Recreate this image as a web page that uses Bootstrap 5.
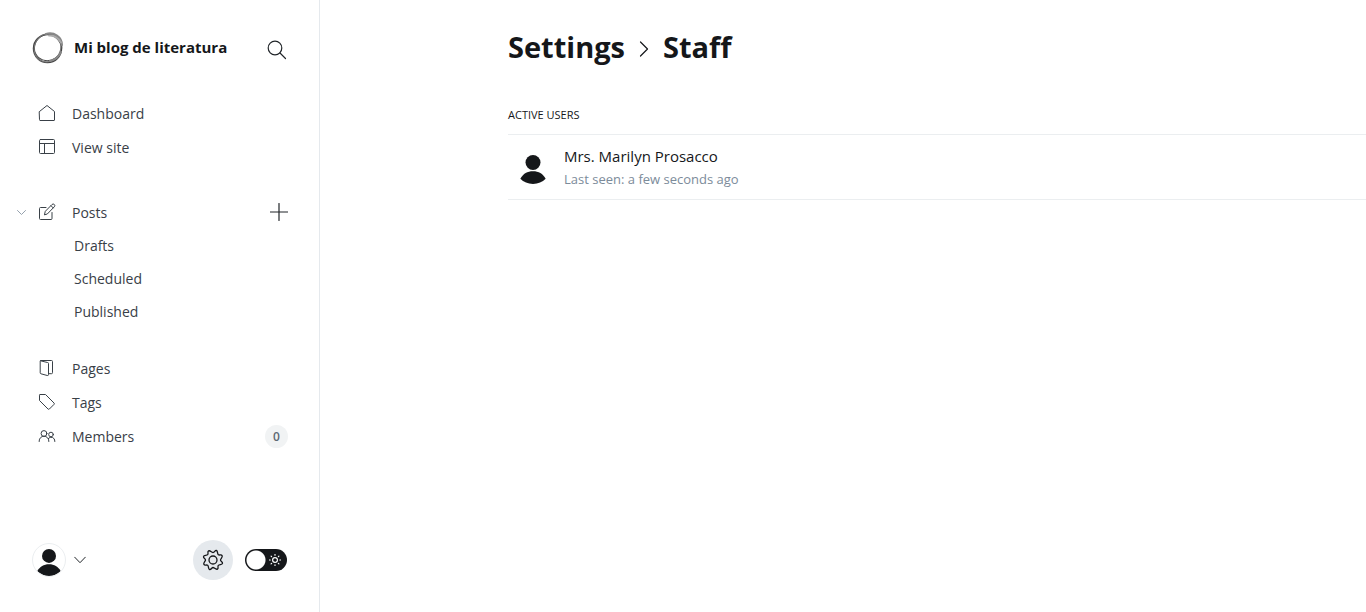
<!DOCTYPE html>
<html lang="es">
<head>
<meta charset="utf-8">
<meta name="viewport" content="width=device-width, initial-scale=1">
<title>Settings - Staff</title>
<link href="https://cdn.jsdelivr.net/npm/bootstrap@5.3.0/dist/css/bootstrap.min.css" rel="stylesheet">
<style>
:root { --ink: #15171a; --slate: #394047; --muted-ink: #7c8b9a; --line: #ebeef0; }
body { font-family: "Open Sans", "Noto Sans", sans-serif; font-size: 14px; color: var(--ink); }
svg { display: block; fill: none; stroke: currentColor; stroke-linecap: round; stroke-linejoin: round; flex: none; }
button { color: inherit; }
.sidebar { width: 320px; flex: none; border-right: 1px solid #e5e9ed; padding: 32px; }
.site-name { font-size: 15px; font-weight: 700; line-height: 30px; margin-left: 10px; }
.menu-list { margin: 0 -15px; }
.menu-row { height: 34px; padding-left: 21px; padding-right: 14px; }
.menu-row a, .sub-row a { color: var(--slate); text-decoration: none; }
.menu-row a { display: flex; align-items: center; gap: 16px; }
.sub-row { height: 33px; line-height: 33px; padding-left: 57px; }
.posts-group { margin: 31px 0 23px; }
.fold-btn { width: 9px; margin-left: -21px; margin-right: 12px; color: #95a1ad; }
.count-pill { min-width: 23px; height: 23px; line-height: 23px; background: #f1f3f4; font-size: 12px; font-weight: 600; color: #5d6873; }
.avatar-ring { width: 34px; height: 34px; border: 1px solid var(--line); border-radius: 50%; }
.gear-btn { width: 40px; height: 40px; background: #e5e9ed; display: grid; place-items: center; color: var(--ink); }
.night { width: 42px; height: 22px; margin-left: 12px; }
.night input { appearance: none; display: block; width: 42px; height: 22px; margin: 0; border-radius: 11px; background: radial-gradient(circle at 11px 11px, #fff 9px, var(--ink) 10px); }
.night svg { position: absolute; right: 6px; top: 5px; color: #fff; pointer-events: none; }
.content { margin-left: 188px; padding-top: 26px; }
h1 { font-size: 29px; font-weight: 700; line-height: 42px; margin: 0; }
h1 a { color: inherit; text-decoration: none; }
.crumb-arrow { margin: 4px 14px 0; }
h2 { font-size: 11px; font-weight: 400; line-height: 16px; margin: 39px 0 11px; text-transform: uppercase; }
.person { border-top: 1px solid var(--line); border-bottom: 1px solid var(--line); height: 66px; padding-left: 10px; color: var(--ink); text-decoration: none; }
.person-name { font-size: 15px; font-weight: 500; line-height: 23px; }
.seen { font-size: 13px; line-height: 22px; color: var(--muted-ink); }
</style>
</head>
<body>
<svg width="0" height="0" class="position-absolute" aria-hidden="true">
  <symbol id="user" viewBox="0 0 32 32"><g fill="#15171a" stroke="none"><circle cx="16" cy="9" r="8"/><path d="M2.500 26.500C5.500 21 10 18.500 16 18.500S26.500 21 29.500 26.500C26 30 21.500 32 16 32S6 30 2.500 26.500Z"/></g></symbol>
</svg>
<div class="d-flex min-vh-100">
  <nav class="sidebar d-flex flex-column" aria-label="Main">
    <header class="d-flex align-items-start mb-3 pb-3">
      <svg width="32" height="32" viewBox="0 0 32 32"><g stroke="#444"><circle cx="15.500" cy="16.500" r="14" stroke-width="1.500"/><ellipse cx="16.500" cy="15.500" rx="14" ry="13" transform="rotate(-35 16 16)" stroke-width="1"/><ellipse cx="15.500" cy="16" rx="13" ry="14.500" transform="rotate(30 16 16)" stroke="#777" stroke-width="1"/><path d="M14 2C22-.5 30 5 30 13M29 20c-2 5-6 8-11 9" stroke="#888" stroke-width="2"/><path d="M17 3.500c5-.5 9 2 12 7" stroke="#aaa" stroke-width="2"/></g></svg>
      <span class="site-name">Mi blog de literatura</span>
      <button class="btn p-0 border-0 ms-auto mt-1" aria-label="Search"><svg class="mt-1" width="20" height="20" viewBox="0 0 20 20" stroke-width="1.200"><circle cx="8" cy="8" r="6.800"/><path d="m13 13 5.500 5.500"/></svg></button>
    </header>
    <ul class="menu-list list-unstyled mt-n1">
      <li class="menu-row d-flex align-items-center"><a href="#"><svg width="18" height="18" viewBox="0 0 18 18"><path d="M1.500 7.500 9 1.500l7.500 6V16a.5.500 0 0 1-.5.500H2a.5.500 0 0 1-.5-.5Z"/></svg>Dashboard</a></li>
      <li class="menu-row d-flex align-items-center"><a href="#"><svg width="18" height="18" viewBox="0 0 18 18" stroke="#60686f"><rect x="1.500" y="1.500" width="15" height="14" rx="1"/><path d="M1.500 5.500h15M6.500 5.500v10"/></svg>View site</a></li>
      <li class="posts-group">
        <div class="menu-row d-flex align-items-center"><button class="fold-btn btn p-0 border-0" aria-label="Toggle posts"><svg width="9" height="5" viewBox="0 0 9 5"><path d="m.5.5 4 4 4-4"/></svg></button><a href="#"><svg width="18" height="18" viewBox="0 0 18 18"><path d="M8 4.500H2.500a1 1 0 0 0-1 1v10a1 1 0 0 0 1 1h10.500a1 1 0 0 0 1-1V9.500M6.500 11.500l.8-3.200 6.700-6.800a1.300 1.300 0 0 1 2.300 2.300L9.600 10.700ZM13 2.700l2.200 2.200"/></svg>Posts</a><button class="btn p-0 border-0 ms-auto" aria-label="New post"><svg width="18" height="18" viewBox="0 0 18 18" stroke="#50585f" stroke-width="1.200"><path d="M9 .5v17M.5 9h17"/></svg></button></div>
        <ul class="list-unstyled">
          <li class="sub-row"><a href="#">Drafts</a></li>
          <li class="sub-row"><a href="#">Scheduled</a></li>
          <li class="sub-row"><a href="#">Published</a></li>
        </ul>
      </li>
      <li class="menu-row d-flex align-items-center"><a href="#"><svg width="18" height="18" viewBox="0 0 18 18" stroke="#60686f"><path d="M2.500 1.800 9.500 3.500a1 1 0 0 1 1 1V15.500a1 1 0 0 1-1.200 1L3 14.800a1 1 0 0 1-.8-1V2.200A.7.700 0 0 1 3 1.500h10.500a1 1 0 0 1 1 1v11.200a1 1 0 0 1-1 1h-3"/></svg>Pages</a></li>
      <li class="menu-row d-flex align-items-center"><a href="#"><svg width="18" height="18" viewBox="0 0 18 18"><path d="M2.200 1.500H7.500L16 10a1 1 0 0 1 0 1.400L11.400 16a1 1 0 0 1-1.400 0L1.500 7.500V2.200a.7.700 0 0 1 .7-.7Z"/></svg>Tags</a></li>
      <li class="menu-row d-flex align-items-center"><a href="#"><svg width="18" height="18" viewBox="0 0 18 18"><circle cx="6" cy="6.500" r="2.900"/><circle cx="13" cy="7.500" r="2.300"/><path d="M1.200 14.500v-.5a4.800 4.800 0 0 1 9.600 0v.5M10.300 11.500a3.700 3.700 0 0 1 6.500 2.500v.5"/></svg>Members</a><span class="count-pill rounded-circle text-center ms-auto">0</span></li>
    </ul>
    <footer class="d-flex align-items-center mt-auto">
      <button class="btn p-0 border-0 d-flex align-items-center gap-2" aria-label="Account"><span class="avatar-ring d-block overflow-hidden"><svg class="mt-1" width="32" height="28" viewBox="0 0 32 32"><use href="#user"/></svg></span><svg width="12" height="8" viewBox="0 0 12 8"><path d="m.7 1.200 5.300 5.500 5.300-5.500"/></svg></button>
      <a href="#" class="gear-btn rounded-circle ms-auto" aria-label="Settings"><svg width="22" height="22" viewBox="-11 -11 22 22" stroke-width="1.300"><circle r="4"/><path d="M0-7.500C1.800-7.500 1.800-9.900 3.400-9.500S4.100-6.300 5.300-5.300 8.200-6 9.100-4.400 7.500-1.300 7.500 0 9.900 1.800 9.500 3.400 6.300 4.100 5.300 5.300 6 8.200 4.400 9.100 1.300 7.500 0 7.500-1.800 9.900-3.400 9.500-4.100 6.300-5.300 5.300-8.200 6-9.100 4.400-7.500 1.300-7.500 0-9.900-1.800-9.500-3.400-6.300-4.100-5.300-5.300-6-8.200-4.400-9.100-1.800-7.500 0-7.500Z"/></svg></a>
      <label class="night position-relative"><input type="checkbox" role="switch" aria-label="Night mode"><svg width="12" height="12" viewBox="0 0 12 12" stroke-width="1.200"><circle cx="6" cy="6" r="2.400"/><path d="M6 .5v.7M6 10.800v.7M.5 6h.7M10.800 6h.7M2.100 2.100l.5.500M9.400 9.400l.5.500M2.100 9.900l.5-.5M9.400 2.600l.5-.5"/></svg></label>
    </footer>
  </nav>
  <main class="flex-grow-1">
    <div class="content">
      <h1 class="d-flex align-items-center"><a href="#">Settings</a><svg class="crumb-arrow" width="10" height="16" viewBox="0 0 10 16" stroke-width="1.200"><path d="m1.500 1 7 7-7 7"/></svg>Staff</h1>
      <h2>Active users</h2>
      <a href="#" class="person d-flex align-items-center gap-3">
        <svg class="mt-1" width="30" height="32" viewBox="0 0 32 32"><use href="#user"/></svg>
        <span><span class="person-name d-block">Mrs. Marilyn Prosacco</span><span class="seen d-block">Last seen: a few seconds ago</span></span>
      </a>
    </div>
  </main>
</div>
</body>
</html>
